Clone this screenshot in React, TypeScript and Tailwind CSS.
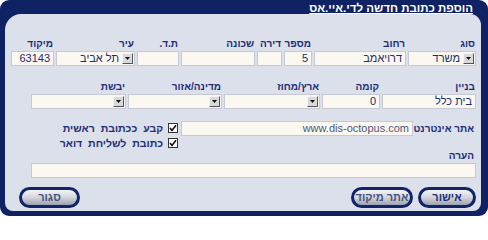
import React from "react";

const font = { fontFamily: '"Liberation Sans", "DejaVu Sans", Arial, sans-serif' };

type Col = { label: string; w: string; value?: string; select?: boolean };

const row1: Col[] = [
  { label: "סוג", w: "w-[68px]", value: "משרד", select: true },
  { label: "רחוב", w: "w-[92px]", value: "דרויאמב" },
  { label: "מספר", w: "w-[28px]", value: "5" },
  { label: "דירה", w: "w-[25px]" },
  { label: "שכונה", w: "w-[74px]" },
  { label: "ת.ד.", w: "w-[42px]" },
  { label: "עיר", w: "w-[79px]", value: "תל אביב", select: true },
  { label: "מיקוד", w: "w-[43px]", value: "63143" },
];

const row2: Col[] = [
  { label: "בניין", w: "w-[94px]", value: "בית כלל" },
  { label: "קומה", w: "w-[58px]", value: "0" },
  { label: "ארץ/מחוז", w: "w-[96px]", select: true },
  { label: "מדינה/אזור", w: "w-[94px]", select: true },
  { label: "יבשת", w: "w-[95px]", select: true },
];

function Arrow() {
  return (
    <div className="w-[11px] h-[11px] mt-[1px] mr-[1px] flex items-center justify-center bg-[#d9d9d9] border border-t-[#f4f4f4] border-l-[#f4f4f4] border-r-[#555] border-b-[#555]">
      <svg width="5" height="3" viewBox="0 0 5 3">
        <polygon points="0,0 5,0 2.5,3" fill="#111" />
      </svg>
    </div>
  );
}

function Input({ w, value, select, className = "" }: { w: string; value?: string; select?: boolean; className?: string }) {
  return (
    <div
      className={`${w} h-[15px] shrink-0 flex items-start bg-[#fbf8f1] border border-[#c6c9d3] text-[11px] leading-[13px] text-[#1e2d6c] ${className}`}
    >
      {select && <Arrow />}
      <span className="px-[3px] whitespace-nowrap">{value}</span>
    </div>
  );
}

function Label({ children, size = "text-[10px]" }: { children: React.ReactNode; size?: string }) {
  return <div className={`${size} font-bold leading-[12px] text-[#1c2f78] whitespace-nowrap`}>{children}</div>;
}

function FieldRow({ cols }: { cols: Col[] }) {
  return (
    <div className="flex gap-[2px]">
      {cols.map((c) => (
        <div key={c.label} className={`${c.w} flex flex-col`}>
          <div className="h-[13px] pr-[1px]">
            <Label>{c.label}</Label>
          </div>
          <Input w="w-full" value={c.value} select={c.select} />
        </div>
      ))}
    </div>
  );
}

function Check({ label }: { label: string }) {
  return (
    <div className="flex items-center gap-[5px] h-[15px]">
      <div className="w-[10px] h-[10px] bg-white border border-[#333] flex items-center justify-center">
        <svg width="8" height="8" viewBox="0 0 8 8">
          <path d="M1 4 L3 6.5 L7 1.2" stroke="#111" strokeWidth="1.6" fill="none" />
        </svg>
      </div>
      <Label size="text-[10.5px] [word-spacing:3px]">{label}</Label>
    </div>
  );
}

function Pill({ children, w, dim }: { children: React.ReactNode; w: string; dim?: boolean }) {
  return (
    <div
      className={`${w} h-[21px] rounded-full border-[3px] border-[#10246a] bg-gradient-to-b from-[#f4f4f6] via-[#d3d5dc] to-[#9ea2ae] flex items-center justify-center text-[11px] font-bold ${
        dim ? "text-[#46557f]" : "text-[#1c2f78]"
      }`}
    >
      {children}
    </div>
  );
}

export default function App() {
  return (
    <div dir="rtl" className="w-[488px] h-[219px] bg-white" style={font}>
      <div className="w-[488px] h-[216px] rounded-[9px] bg-[#0f2364] pt-[14px] pl-[5px] pr-[7px] pb-[5px] flex flex-col relative">
        {/* Title */}
        <div className="absolute top-[2px] right-[15px] text-[11.5px] font-bold leading-[12px] text-white underline underline-offset-[1px]">
          הוספת כתובת חדשה לדי.איי.אס
        </div>

        {/* Panel */}
        <div className="flex-1 bg-[#dce0eb] rounded-tl-[16px] rounded-tr-[11px] rounded-b-[8px] pt-[24px] pr-[5px] pl-[4px] flex flex-col">
          <FieldRow cols={row1} />

          <div className="mt-[15px]">
            <FieldRow cols={row2} />
          </div>

          {/* Website + checkboxes */}
          <div className="mt-[12px] flex items-start gap-[2px]">
            <div className="w-[61px] shrink-0 h-[15px] flex items-center pr-[2px]">
              <Label>אתר אינטרנט</Label>
            </div>
            <Input w="w-[232px]" value="www.dis-octopus.com" className="text-[#4b5677] justify-start" />
            <div className="flex flex-col mr-[1px] -mt-[1px]">
              <Check label="קבע ככתובת ראשית" />
              <Check label="כתובת לשליחת דואר" />
            </div>
          </div>

          {/* Note */}
          <div className="pr-[2px]">
            <Label>הערה</Label>
          </div>
          <div className="mt-[1px] flex">
            <Input w="w-[445px]" />
          </div>

          {/* Buttons */}
          <div className="mt-[9px] flex items-center">
            <Pill w="w-[58px]">אישור</Pill>
            <div className="w-[5px]" />
            <Pill w="w-[62px]" dim>
              אתר מיקוד
            </Pill>
            <div className="flex-1" />
            <div className="ml-[10px]">
              <Pill w="w-[61px]" dim>
                סגור
              </Pill>
            </div>
          </div>
        </div>
      </div>
    </div>
  );
}
